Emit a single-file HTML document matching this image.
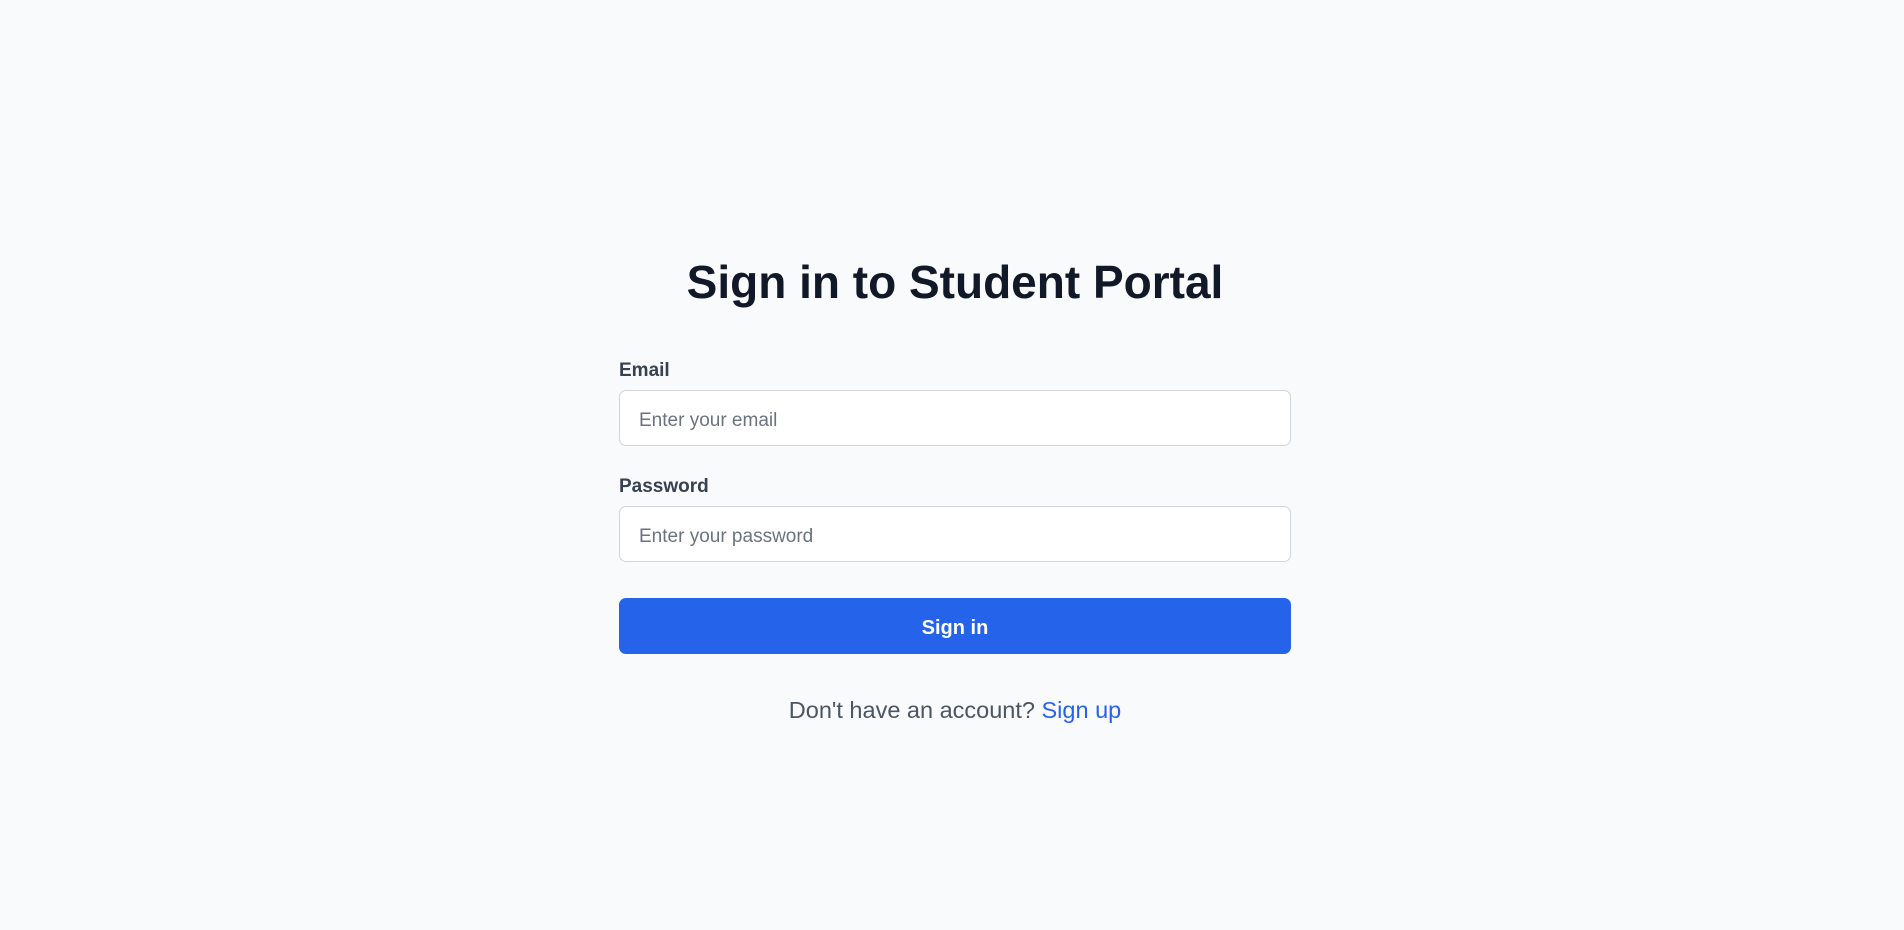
<!DOCTYPE html>
<html><head><meta charset="utf-8"><style>
html,body{margin:0;padding:0;width:1904px;height:930px;background:#f8fafc;font-family:"Liberation Sans",sans-serif;overflow:hidden}
.wrap{position:absolute;left:619px;width:672px;top:0}
h1{position:absolute;top:252px;left:-200px;width:1072px;margin:0;text-align:center;font-size:46px;font-weight:bold;color:#111827;line-height:60px}
label{position:absolute;left:0;font-size:19px;font-weight:bold;color:#374151;line-height:22px}
.in{position:absolute;left:0;width:670px;height:54px;border:1px solid #d1d5db;border-radius:7px;background:#fff;box-sizing:content-box}
.in span{position:absolute;left:19px;top:19px;font-size:19px;color:#6b7280;line-height:22px}
.btn{position:absolute;left:0;width:672px;height:56px;top:598px;background:#2563eb;border-radius:7px;color:#fff;font-weight:bold;font-size:20px;text-align:center;line-height:60px}
.foot{position:absolute;top:695px;left:0;width:672px;text-align:center;font-size:23.5px;color:#4b5563;line-height:30px}
.foot a{color:#2563eb;text-decoration:none}
</style></head><body><div class="wrap">
<h1>Sign in to Student Portal</h1>
<label style="top:360px">Email</label>
<div class="in" style="top:390px"><span>Enter your email</span></div>
<label style="top:476px">Password</label>
<div class="in" style="top:506px"><span>Enter your password</span></div>
<div class="btn">Sign in</div>
<div class="foot">Don't have an account? <a>Sign up</a></div>
</div></body></html>
